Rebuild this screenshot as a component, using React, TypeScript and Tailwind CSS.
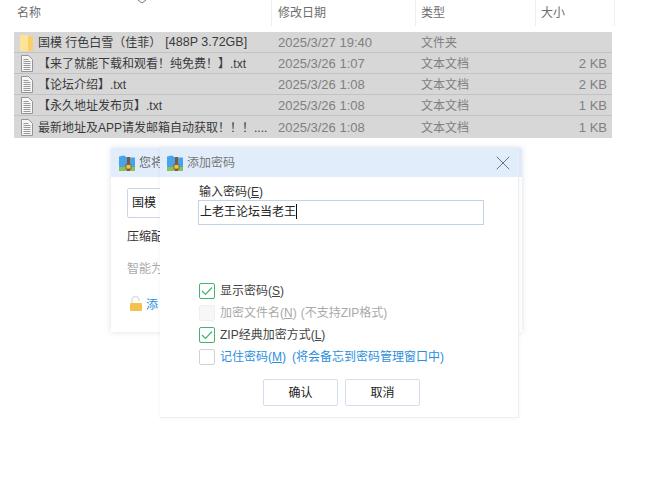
import React from 'react';
import { X } from 'lucide-react';

const font = "[font-family:'Liberation_Sans','Noto_Sans_CJK_SC',sans-serif]";

const files = [
  { name: '国模 行色白雪（佳菲）', extra: '[488P 3.72GB]', date: '2025/3/27 19:40', type: '文件夹', size: '', folder: true },
  { name: '【来了就能下载和观看！纯免费！】.txt', extra: '', date: '2025/3/26 1:07', type: '文本文档', size: '2 KB', folder: false },
  { name: '【论坛介绍】.txt', extra: '', date: '2025/3/26 1:08', type: '文本文档', size: '2 KB', folder: false },
  { name: '【永久地址发布页】.txt', extra: '', date: '2025/3/26 1:08', type: '文本文档', size: '1 KB', folder: false },
  { name: '最新地址及APP请发邮箱自动获取！！！....', extra: '', date: '2025/3/26 1:08', type: '文本文档', size: '1 KB', folder: false },
];

const FolderIcon = () => (
  <svg width="13" height="16" viewBox="0 0 13 16" className="shrink-0">
    <path d="M0 0h7l1 1v15H0z" fill="#fde397" />
    <path d="M8 1h4.500l.5 1v12.500l-.5 1.500H8z" fill="#f9cf6b" />
  </svg>
);

const TextIcon = () => (
  <svg width="12" height="17" viewBox="0 0 12 17" className="shrink-0">
    <path d="M.5.5h7l4 4v12H.5z" fill="#f6f6f6" stroke="#959595" />
    <path d="M2.500 4.500h5M2.500 6.500h7M2.500 8.500h7M2.500 10.500h7M2.500 12.500h7M2.500 14.500h7" stroke="#9a9a9a" />
  </svg>
);

const ZipIcon = () => (
  <svg width="16" height="16" viewBox="0 0 16 16" className="shrink-0">
    <path d="M0 1.500l5-1 3 2h8v10H0z" fill="#4aa3e8" />
    <path d="M0 12h16v4H0z" fill="#8fc04c" />
    <path d="M8 2h3v14H8z" fill="#7b5a35" />
    <path d="M7 9.500h5v4.500H7z" fill="#f2c14e" stroke="#7b5a35" strokeWidth="0.800" />
  </svg>
);

const Check = ({ on, disabled }: { on?: boolean; disabled?: boolean }) => (
  <span
    className={`ml-px flex h-4 w-4 shrink-0 items-center justify-center rounded-[2px] border ${
      on ? 'border-[#3fb56f]' : disabled ? 'border-[#efefef] bg-[#f7f7f7]' : 'border-[#d2d2d2]'
    }`}
  >
    {on && (
      <svg width="12" height="10" viewBox="0 0 12 10">
        <path d="M1 5l3.500 3.500L11 1.500" fill="none" stroke="#3fb56f" strokeWidth="1.200" />
      </svg>
    )}
  </span>
);

export default function App() {
  return (
    <div className={`relative h-[477px] w-[647px] overflow-hidden bg-white text-[12px] ${font}`}>
      {/* File list header */}
      <div className="flex h-[26px] items-center text-[#6d6d6d]">
        <div className="w-[271px] pl-[17px]">名称</div>
        <div className="h-full w-[144px] border-l border-[#eeeeee] pl-[6px] leading-[26px]">修改日期</div>
        <div className="h-full w-[120px] border-l border-[#eeeeee] pl-[5px] leading-[26px]">类型</div>
        <div className="h-full w-[80px] border-l border-r border-[#eeeeee] pl-[5px] leading-[26px]">大小</div>
      </div>
      <svg width="10" height="4" viewBox="0 0 10 4" className="absolute left-[137px] top-0">
        <path d="M1 0l4 3 4-3" fill="none" stroke="#777" />
      </svg>

      {/* Selected rows */}
      <div className="ml-[14px] mt-[6px] w-[598px]">
        {files.map((f) => (
          <div key={f.name} className="flex h-[21px] items-center border-b border-[#c2c2c2] bg-[#d7d7d8] pt-px last:h-[22px] last:border-b-0">
            <div className={`flex w-[258px] items-center whitespace-nowrap text-[#3a3a3a] ${f.folder ? 'pl-[6px]' : 'pl-[7px]'}`}>
              {f.folder ? <FolderIcon /> : <TextIcon />}
              <span className="ml-[5px]">{f.name}</span>
              {f.extra && <span className="ml-[4px] text-[12.500px]">{f.extra}</span>}
            </div>
            <div className="w-[144px] pl-[6px] text-[13px] text-[#808080]">{f.date}</div>
            <div className="w-[120px] pl-[5px] text-[#808080]">{f.type}</div>
            <div className="w-[71px] text-right text-[13px] text-[#808080]">{f.size}</div>
          </div>
        ))}
      </div>

      {/* Dialog behind */}
      <div className="absolute left-[111px] top-[148px] h-[184px] w-[411px] bg-white shadow-[0_0_6px_rgba(90,100,140,0.2)]">
        <div className="flex h-[29px] items-center gap-[4px] bg-[#e1edfb] pl-[8px] text-[#666666]">
          <ZipIcon />
          <span>您将</span>
        </div>
        <div className="flex flex-col items-start pl-[16px]">
          <div className="mt-[11px] h-[30px] w-[60px] rounded-[2px] border border-[#c9d6e6] pl-[4px] leading-[28px] text-[#222222]">国模</div>
          <div className="mt-[10px] text-[#333333]">压缩配</div>
          <div className="mt-[14px] text-[#aaaaaa]">智能为</div>
          <div className="mt-[15px] flex items-center gap-[3px] text-[#2b8fdc]">
            <svg width="14" height="16" viewBox="0 0 14 16" className="ml-[2px]">
              <path d="M3 7V4a3.500 3.500 0 0 1 7 0v1" fill="none" stroke="#dedede" strokeWidth="1.500" />
              <rect x="1" y="7" width="12" height="8" rx="1" fill="#f5c04e" />
            </svg>
            <span className="mt-[3px]">添</span>
          </div>
        </div>
      </div>

      {/* Password dialog */}
      <div className="absolute left-[160px] top-[148px] h-[270px] w-[359px] border-b border-r border-[#eeeef5] bg-white shadow-[0_0_3px_rgba(120,130,170,0.12)]">
        <div className="flex h-[29px] items-center gap-[4px] bg-[#e1edfb] pl-[7px] pr-[3px] text-[#777777]">
          <ZipIcon />
          <span>添加密码</span>
          <X size={24} strokeWidth={0.8} className="ml-auto text-[#555555]" />
        </div>
        <div className="pl-[38px]">
          <div className="mt-[8px] h-[15px] pl-px leading-[15px] text-[#333333]">
            输入密码(<span className="underline">E</span>)
          </div>
          <div className="flex h-[25px] w-[286px] items-center border border-[#c3d3e6] pb-[2px] pl-px text-[#222222]">
            上老王论坛当老王<span className="h-[15px] w-px bg-[#111111]" />
          </div>
          <div className="mt-[58px] flex flex-col gap-[6px]">
            <div className="flex h-[16px] items-center gap-[5px] text-[#444444]">
              <Check on />
              <span>显示密码(<span className="underline">S</span>)</span>
            </div>
            <div className="flex h-[16px] items-center gap-[5px] text-[#a9a9a9]">
              <Check disabled />
              <span>加密文件名(<span className="underline">N</span>)<span className="ml-[4px]">(不支持ZIP格式)</span></span>
            </div>
            <div className="flex h-[16px] items-center gap-[5px] text-[#444444]">
              <Check on />
              <span>ZIP经典加密方式(<span className="underline">L</span>)</span>
            </div>
            <div className="flex h-[16px] items-center gap-[5px] text-[#2b8fdc]">
              <Check />
              <span>记住密码(<span className="underline">M</span>)<span className="ml-[6px]">(将会备忘到密码管理窗口中)</span></span>
            </div>
          </div>
          <div className="ml-[65px] mt-[14px] flex gap-[7px] text-[#222222]">
            <button className="h-[27px] w-[75px] rounded-[2px] border border-[#d3dfec] bg-white">确认</button>
            <button className="h-[27px] w-[75px] rounded-[2px] border border-[#d3dfec] bg-white">取消</button>
          </div>
        </div>
      </div>
    </div>
  );
}
